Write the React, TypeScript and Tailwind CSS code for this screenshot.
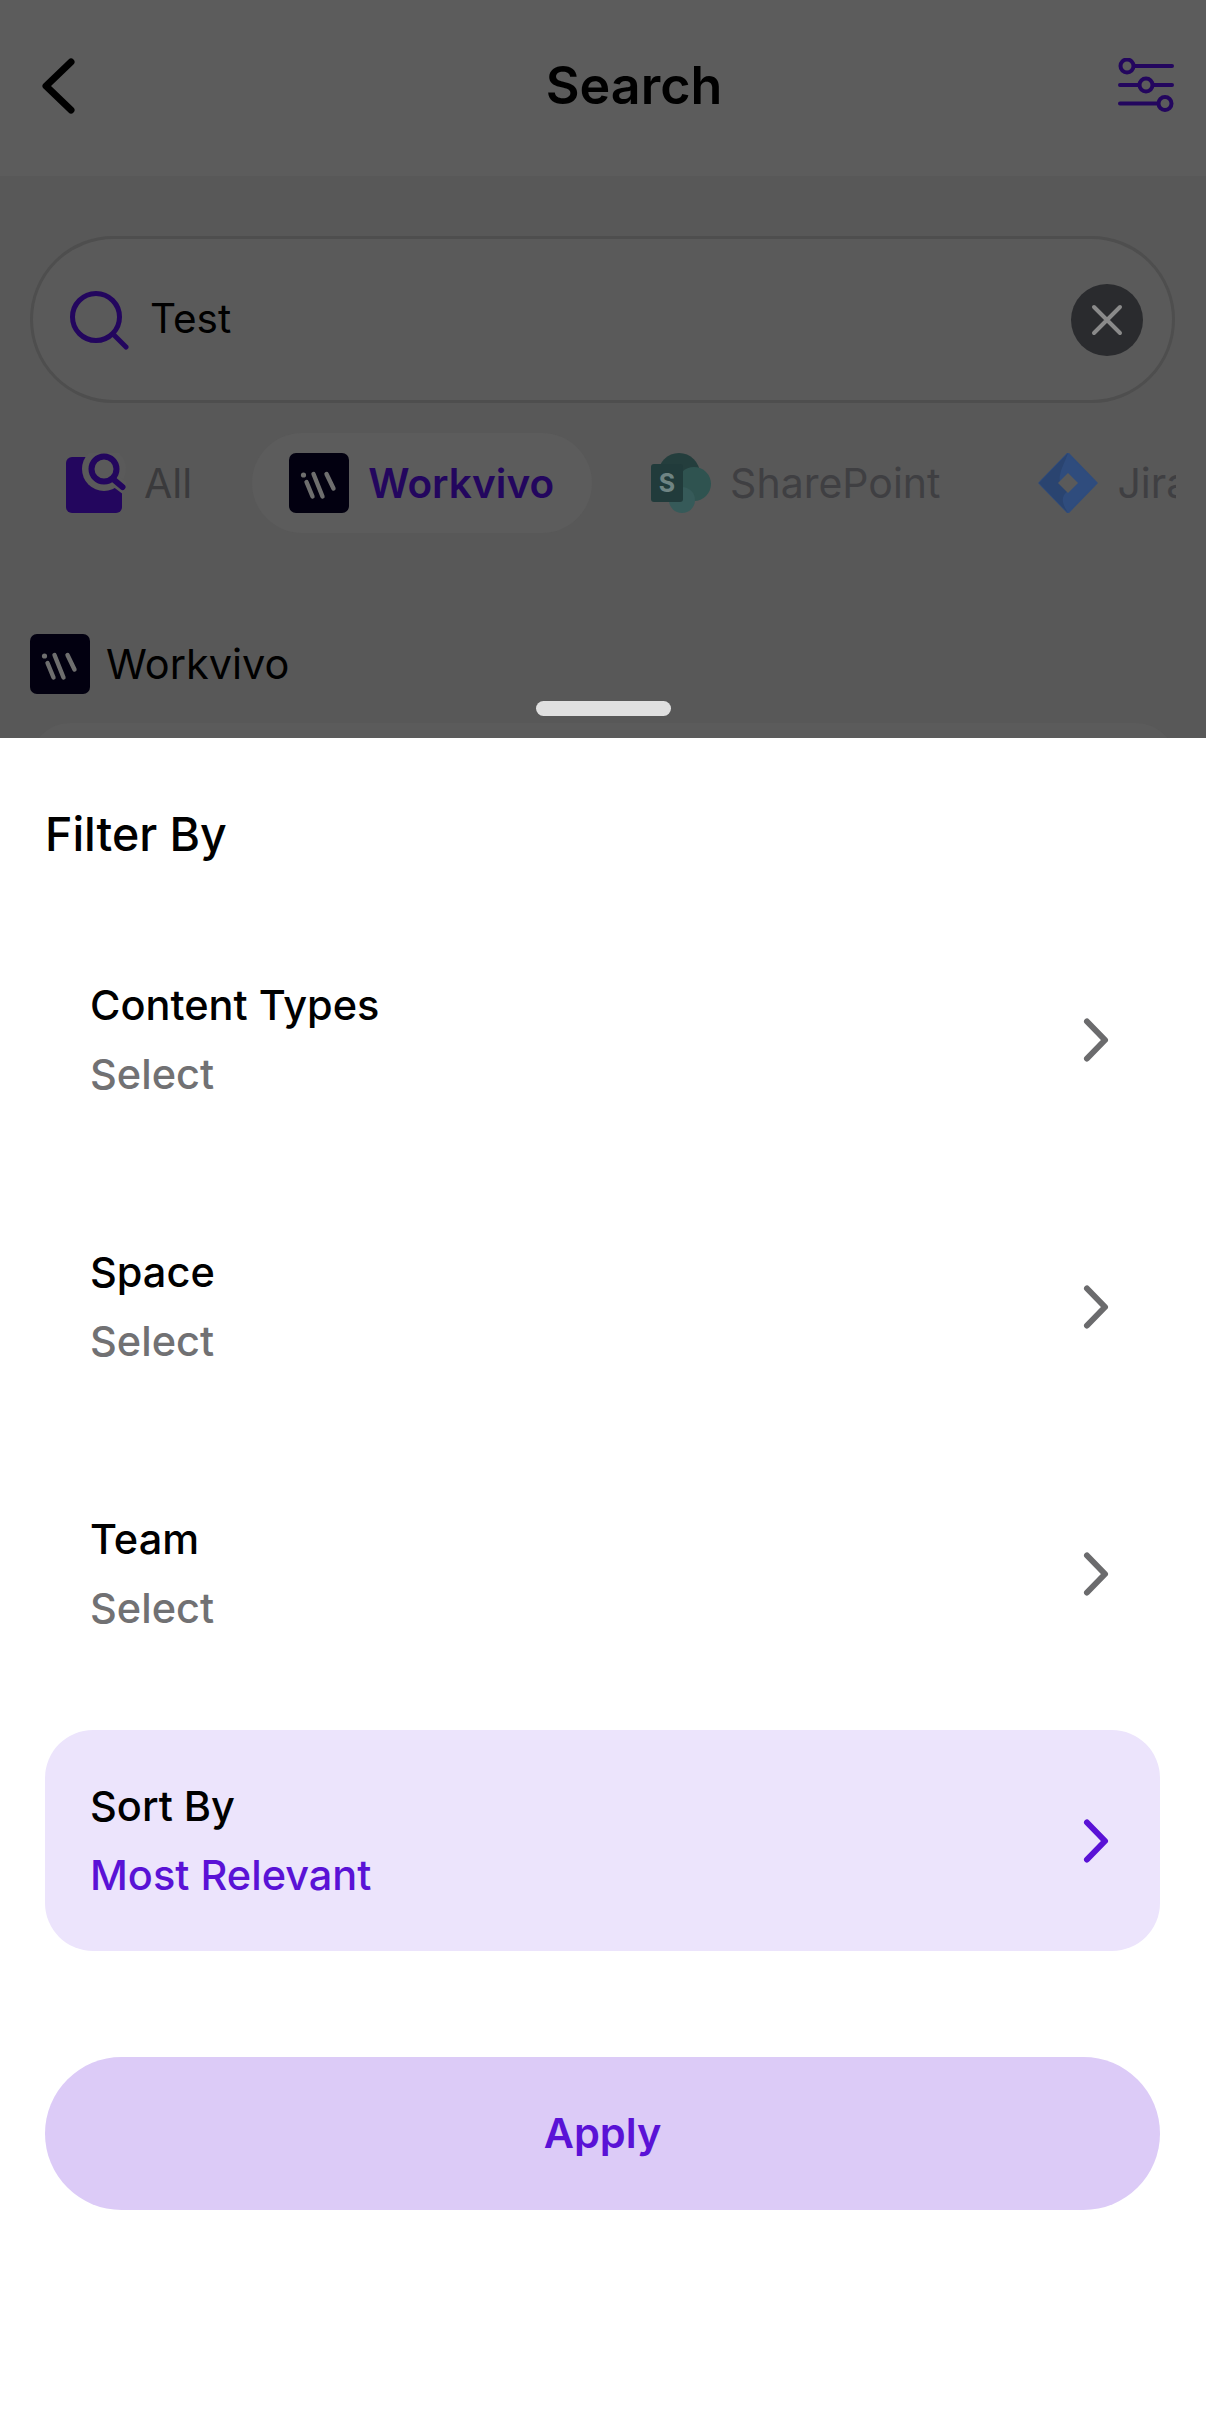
const rows = ["Content Types", "Space", "Team"];

function Chevron({ color }: { color: string }) {
  return (
    <svg width="32" height="48" viewBox="0 0 32 48" fill="none">
      <path d="M5 5.5 L23 24 L5 42.5" stroke={color} strokeWidth="6" strokeLinecap="round" strokeLinejoin="round" />
    </svg>
  );
}

function WorkvivoIcon() {
  return (
    <svg width="60" height="60" viewBox="0 0 60 60" className="shrink-0">
      <rect width="60" height="60" rx="7" fill="#020010" />
      <circle cx="14.5" cy="22" r="2.6" fill="#6e6e6e" />
      <path d="M17.5 29 L23.5 43.5 M24.5 21 L33.5 43.5 M37.5 21 L44.5 35.5" stroke="#6e6e6e" strokeWidth="4.4" strokeLinecap="round" />
    </svg>
  );
}

function AllIcon() {
  return (
    <svg width="60" height="60" viewBox="0 0 60 60" className="shrink-0">
      <rect x="0" y="4" width="56" height="56" rx="6" fill="#23065e" />
      <circle cx="38" cy="16" r="22" fill="#5a5a5a" />
      <path d="M48 27 L60 36" stroke="#5a5a5a" strokeWidth="12" />
      <circle cx="38" cy="16" r="12.5" fill="none" stroke="#23065e" strokeWidth="6" />
      <path d="M47 26 L56.5 34" stroke="#23065e" strokeWidth="6" strokeLinecap="round" />
    </svg>
  );
}

function SharePointIcon() {
  return (
    <svg width="60" height="60" viewBox="0 0 60 60" className="shrink-0">
      <circle cx="28" cy="21" r="21" fill="#243e3d" />
      <circle cx="43" cy="31" r="17" fill="#2f5350" />
      <circle cx="31" cy="47" r="13" fill="#365a59" />
      <rect x="0" y="11" width="32" height="38" rx="3" fill="#213b3b" />
      <text x="16" y="39" textAnchor="middle" fontSize="25" fontWeight="700" fontFamily="Inter, sans-serif" fill="#6f8483">S</text>
    </svg>
  );
}

function JiraIcon() {
  return (
    <svg width="60" height="60" viewBox="0 0 60 60" className="shrink-0">
      <path d="M30 0 L59 30 L30 60 L1 30 Z" fill="#2f4c7d" stroke="#2f4c7d" strokeWidth="1.5" strokeLinejoin="round" />
      <path d="M30 0 L1 30 L30 60 C24 50 22 44 30 38 L22 30 C20 20 26 12 30 0 Z" fill="#2a4470" />
      <path d="M30 20 L40 30 L30 40 L20 30 Z" fill="#5a5a5a" />
    </svg>
  );
}

export default function App() {
  return (
    <div className="w-[1206px] h-[2414px] flex flex-col bg-white font-['Inter',sans-serif] overflow-hidden">
      <div className="relative h-[738px] shrink-0 bg-[#585858] overflow-hidden">
        <header className="h-[176px] bg-[#5c5c5c] flex items-start justify-between pt-[58px] pl-[40px] pr-[32px]">
          <svg width="36" height="56" viewBox="0 0 36 56" fill="none">
            <path d="M31 4 L6 28 L31 52" stroke="#000" strokeWidth="7" strokeLinecap="round" strokeLinejoin="round" />
          </svg>
          <h1 className="text-[52px] leading-[56px] font-semibold text-black ml-[74px]">Search</h1>
          <svg width="56" height="56" viewBox="0 0 56 56" fill="none" stroke="#23065e" strokeWidth="4" strokeLinecap="round">
            <path d="M16 8 H54 M2 27 H54 M2 45.5 H40" />
            <circle cx="9" cy="8" r="6.5" fill="#5c5c5c" />
            <circle cx="28" cy="27" r="6.5" fill="#5c5c5c" />
            <circle cx="47" cy="45.5" r="6.5" fill="#5c5c5c" />
          </svg>
        </header>

        <div className="ml-[30px] mr-[31px] mt-[60px] h-[167px] rounded-full border-[3px] border-[#4e4e4e] bg-[#5a5a5a] flex items-center pl-[36px] pr-[29px]">
          <svg width="60" height="60" viewBox="0 0 60 60" fill="none" stroke="#23065e" strokeWidth="5" strokeLinecap="round" className="shrink-0">
            <circle cx="27" cy="27" r="23.5" />
            <path d="M45 45 L57 57" />
          </svg>
          <span className="ml-[21px] text-[40.5px] text-black flex-1">Test</span>
          <div className="w-[72px] h-[72px] rounded-full bg-[#2a2b2e] flex items-center justify-center">
            <svg width="32" height="32" viewBox="0 0 32 32" stroke="#8a8a8a" strokeWidth="4" strokeLinecap="round">
              <path d="M3 3 L29 29 M29 3 L3 29" />
            </svg>
          </div>
        </div>

        <div className="ml-[30px] w-[1146px] mt-[30px] h-[100px] overflow-hidden flex gap-[23px] items-center text-[41px] whitespace-nowrap">
          <div className="flex items-center gap-[18px] pl-[36px] pr-[37px] text-[#3a3a3c]">
            <AllIcon />
            <span className="pt-[2px]">All</span>
          </div>
          <div className="flex items-center gap-[19px] pl-[37px] pr-[38px] h-[100px] rounded-full bg-[#5c5c5c] text-[#23065e] font-semibold">
            <WorkvivoIcon />
            <span className="pt-[2px] text-[40.5px]">Workvivo</span>
          </div>
          <div className="flex items-center gap-[19px] pl-[36px] pr-[39px] text-[#3f3f42]">
            <SharePointIcon />
            <span className="pt-[2px]">SharePoint</span>
          </div>
          <div className="flex items-center gap-[19px] px-[36px] text-[#3f3f42]">
            <JiraIcon />
            <span className="pt-[2px]">Jira</span>
          </div>
        </div>

        <div className="ml-[30px] mt-[100px] flex items-center gap-[16px] text-[41.5px] text-black">
          <WorkvivoIcon />
          <span>Workvivo</span>
        </div>

        <div className="mx-[30px] mt-[28px] h-[40px] rounded-t-[40px] bg-[#5b5b5b]" />

        <div className="absolute left-[536px] top-[701px] w-[135px] h-[15px] rounded-full bg-[#e0e0e0]" />
      </div>

      <div className="flex-1 pl-[45px] pr-[46px] flex flex-col">
        <h2 className="mt-[66px] text-[46.5px] leading-[60px] font-[450] text-black">Filter By</h2>
        <div className="mt-[65px] flex flex-col gap-[46px]">
          {rows.map((title) => (
            <div key={title} className="h-[221px] flex items-center justify-between pl-[45px] pr-[46px]">
              <div className="flex flex-col gap-[16px]">
                <span className="text-[41.5px] leading-[53px] font-[450] text-black">{title}</span>
                <span className="text-[41.5px] leading-[53px] font-[450] text-[#717173]">Select</span>
              </div>
              <Chevron color="#6b6b6d" />
            </div>
          ))}
          <div className="h-[221px] rounded-[48px] bg-[#ece4fc] flex items-center justify-between pl-[45px] pr-[46px]">
            <div className="flex flex-col gap-[16px]">
              <span className="text-[41.5px] leading-[53px] font-[450] text-black">Sort By</span>
              <span className="text-[41.5px] leading-[53px] font-[450] text-[#5a12d6]">Most Relevant</span>
            </div>
            <Chevron color="#5a12d6" />
          </div>
        </div>
        <button className="mt-[106px] h-[153px] rounded-full bg-[#dccbf7] text-[#5a12d6] text-[41.5px] font-semibold">Apply</button>
      </div>
    </div>
  );
}
